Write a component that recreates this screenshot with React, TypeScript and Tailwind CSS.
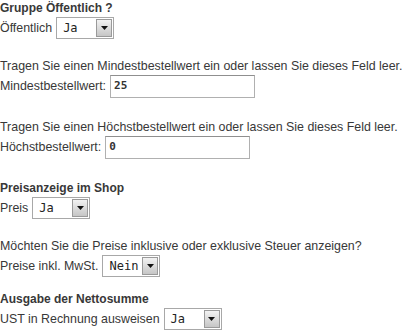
import React from 'react';

const font = { fontFamily: '"Liberation Sans", Arial, sans-serif' };

const FakeSelect = ({ value, width = 'w-[58px]' }: { value: string; width?: string }) => {
    return (
        <div className={`flex h-[22px] ${width} border border-[#a8a8a8] bg-white`}>
            <div className="flex flex-1 items-center pl-[6px] text-[12px] text-[#222] font-['DejaVu_Sans_Mono',monospace]">{value}</div>
            <div className="m-[1px] flex w-[16px] items-center justify-center border border-[#9a9a9a] bg-gradient-to-b from-[#f2f2f2] to-[#c6c6c6]">
                <svg width="7" height="4" viewBox="0 0 7 4">
                    <path d="M0 0H7L3.5 4Z" fill="#111" />
                </svg>
            </div>
        </div>
    );
}

const TextInput = ({ value, width = 'w-[145px]' }: { value: string; width?: string }) => {
    return (
        <div className={`flex h-[23px] ${width} items-center border border-[#b0b0b0] border-t-[#8f8f8f] bg-white pl-[3px] text-[11px] font-bold text-[#333] font-['DejaVu_Sans_Mono',monospace]`}>
            {value}
        </div>
    );
}

const Row = ({ label, children }: { label: string; children: React.ReactNode }) => (
    <div className="flex h-[24px] items-center gap-[4px]">
        <span>{label}</span>
        {children}
    </div>
);

export default function App() {
    return (
        <div className="h-[333px] w-[419px] overflow-hidden bg-white text-[12.4px] leading-[16px] text-[#383838]" style={font}>
            <div>
                <div className="text-[12px] font-bold">Gruppe Öffentlich ?</div>
                <Row label="Öffentlich"><FakeSelect value="Ja" /></Row>
            </div>
            <div className="mt-[18px]">
                <div>Tragen Sie einen Mindestbestellwert ein oder lassen Sie dieses Feld leer.</div>
                <Row label="Mindestbestellwert:"><TextInput value="25" /></Row>
            </div>
            <div className="mt-[21px]">
                <div>Tragen Sie einen Höchstbestellwert ein oder lassen Sie dieses Feld leer.</div>
                <Row label="Höchstbestellwert:"><TextInput value="0" /></Row>
            </div>
            <div className="mt-[21px]">
                <div className="text-[12px] font-bold">Preisanzeige im Shop</div>
                <Row label="Preis"><FakeSelect value="Ja" /></Row>
            </div>
            <div className="mt-[18px]">
                <div>Möchten Sie die Preise inklusive oder exklusive Steuer anzeigen?</div>
                <Row label="Preise inkl. MwSt."><FakeSelect value="Nein" /></Row>
            </div>
            <div className="mt-[13px]">
                <div className="text-[12px] font-bold">Ausgabe der Nettosumme</div>
                <Row label="UST in Rechnung ausweisen"><FakeSelect value="Ja" /></Row>
            </div>
        </div>
    );
}
